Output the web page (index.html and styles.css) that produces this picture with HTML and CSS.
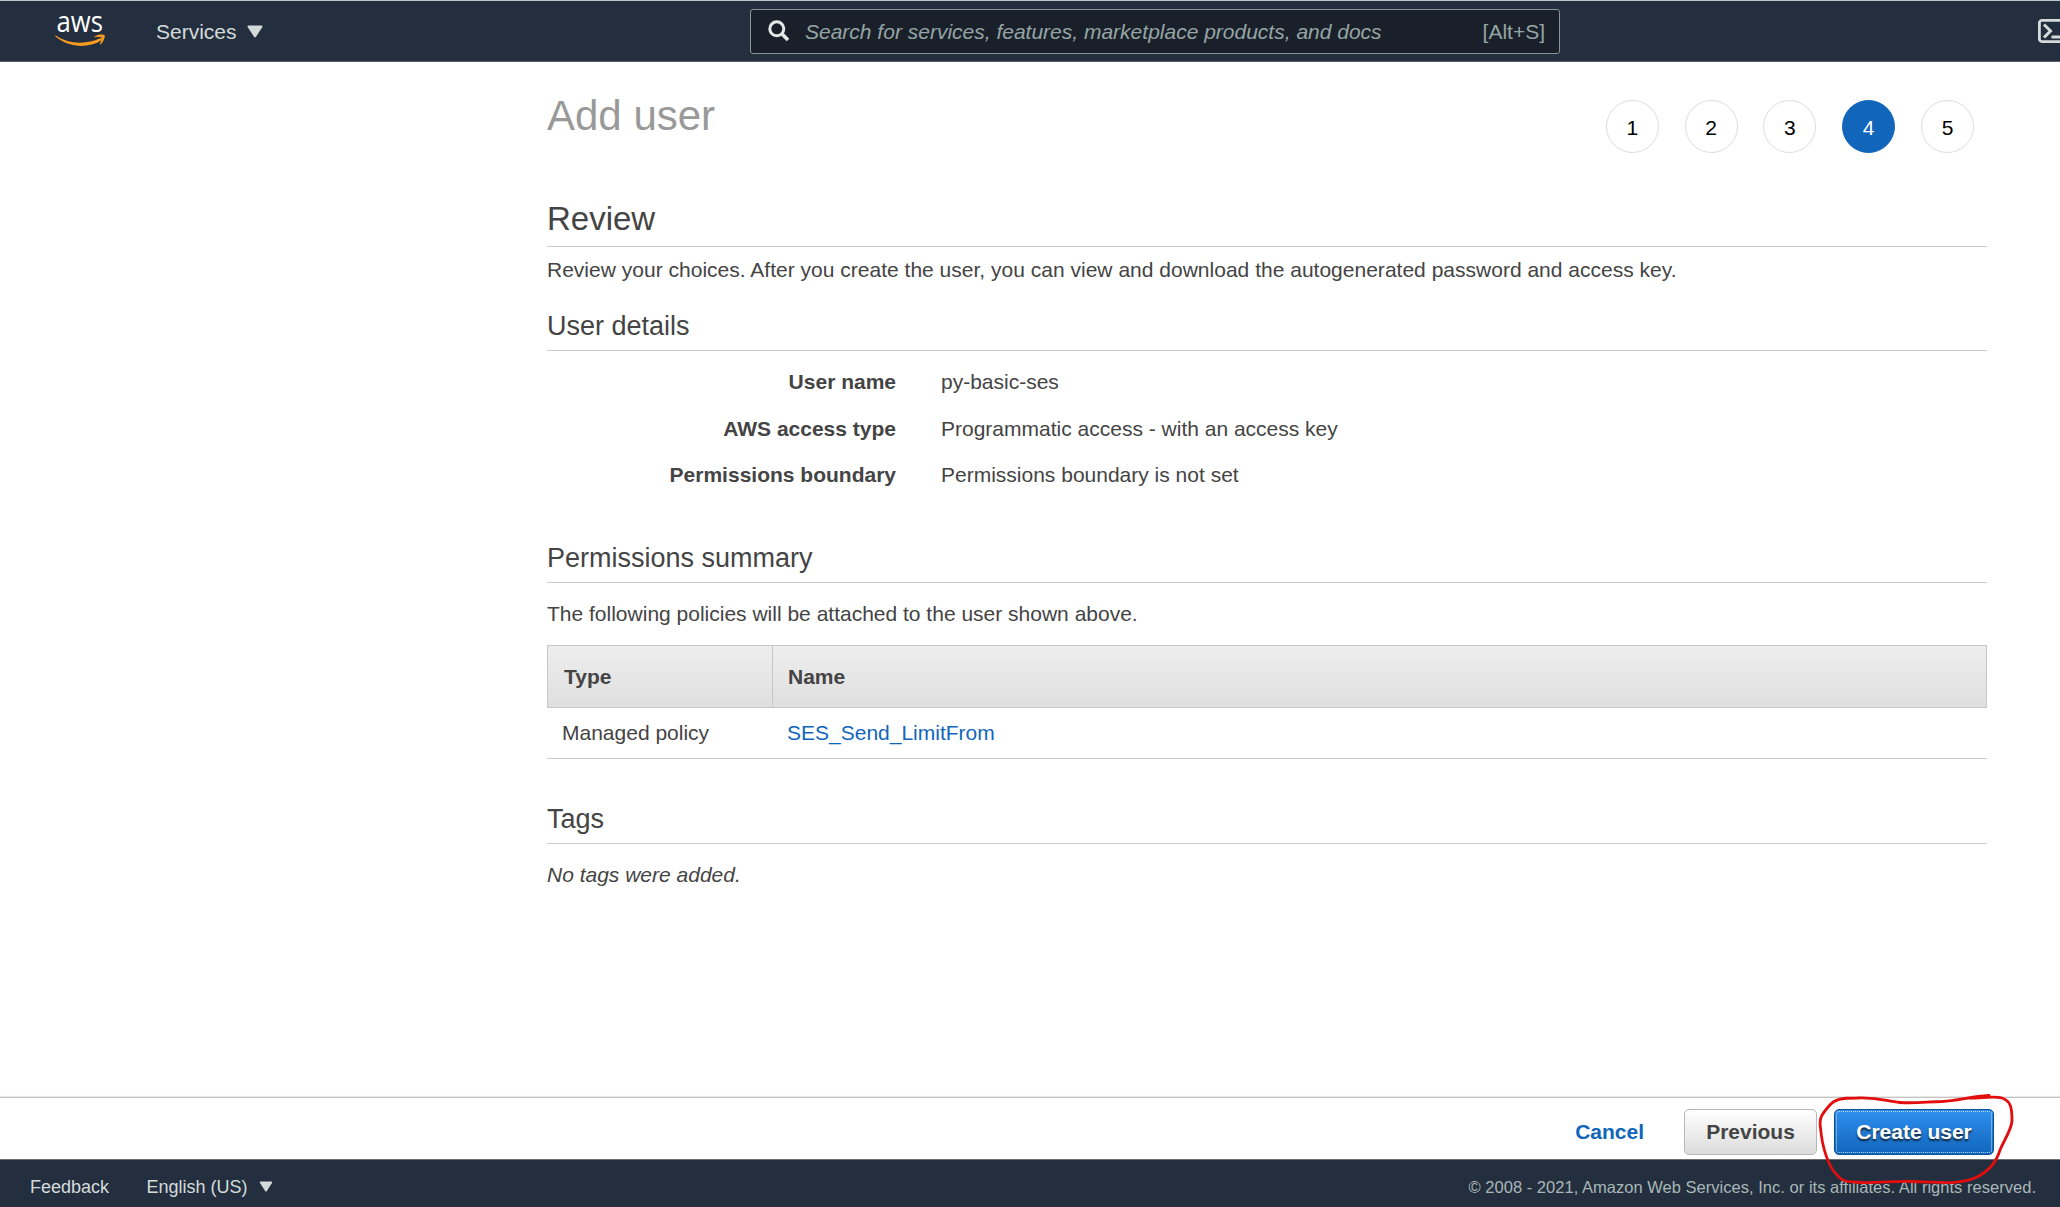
FILE: index.html
```html
<!DOCTYPE html>
<html lang="en">
<head>
<meta charset="utf-8">
<title>Add user</title>
<link rel="stylesheet" href="styles.css">
</head>
<body>
<header class="topbar">
  <svg class="logo" width="54" height="54" viewBox="-1 -14 54 54">
    <text class="logo-text" x="2.500" y="18.500" textLength="46.500" lengthAdjust="spacingAndGlyphs">aws</text>
    <path d="M2 22.500C14 31 32 32 46 25.300C48 24.600 48.500 26.500 47 27.500C34 36 14 34.500 1.500 23.500C1 22.800 1.400 22.200 2 22.500Z" fill="#f79a20"/>
    <path d="M40.500 23.500C44 20.800 50 21 50.700 22.300C51.300 24 49.500 29 46.500 31.500C46 31.800 45.600 31.500 45.900 31C47 28.500 48 25.500 47.500 24.600C46.500 23.700 43.500 23.900 41 24.300C40.300 24.300 40 23.900 40.500 23.500Z" fill="#f79a20"/>
  </svg>
  <nav class="services"><span class="label">Services</span>
    <svg width="16" height="13" viewBox="0 0 16 13"><path d="M1.500 .5H14.500Q16 .8 15.200 2.200L9 11.800Q8 13 7 11.800L.8 2.200Q0 .8 1.500 .5Z" fill="#d5dbdb"/></svg>
  </nav>
  <div class="search">
    <svg width="22" height="22" viewBox="0 0 22 22" fill="none" stroke="#e3e8e8" stroke-width="3"><circle cx="8.800" cy="8.800" r="7"/><path d="M13.800 13.800L20 20" stroke-width="3.600"/></svg>
    <span class="placeholder label">Search for services, features, marketplace products, and docs</span>
    <span class="shortcut label">[Alt+S]</span>
  </div>
  <svg class="shell" width="22" height="24" viewBox="0 0 22 24" fill="none" stroke="#d5dbdb"><rect x="1.400" y="1.400" width="23" height="21.200" rx="2.500" stroke-width="2.800"/><path d="M6 5.500L12.500 12L6 18.500M13.500 18H22" stroke-width="3"/></svg>
</header>

<main class="content">
  <div class="heading">
    <h1>Add user</h1>
    <ol class="steps">
      <li>1</li><li>2</li><li>3</li><li class="active">4</li><li>5</li>
    </ol>
  </div>
  <h2>Review</h2>
  <p class="intro">Review your choices. After you create the user, you can view and download the autogenerated password and access key.</p>

  <h3 class="details-title">User details</h3>
  <dl class="details">
    <dt>User name</dt><dd>py-basic-ses</dd>
    <dt>AWS access type</dt><dd>Programmatic access - with an access key</dd>
    <dt>Permissions boundary</dt><dd>Permissions boundary is not set</dd>
  </dl>

  <h3 class="summary-title">Permissions summary</h3>
  <p class="summary">The following policies will be attached to the user shown above.</p>
  <div class="policies">
    <div class="row head"><div class="type">Type</div><div class="name">Name</div></div>
    <div class="row"><div class="type">Managed policy</div><div class="name"><a>SES_Send_LimitFrom</a></div></div>
  </div>

  <h3 class="tags-title">Tags</h3>
  <p class="no-tags">No tags were added.</p>
</main>

<div class="actions">
  <span class="cancel">Cancel</span>
  <button class="btn previous">Previous</button>
  <button class="btn create">Create user</button>
</div>
<footer class="footer">
  <span class="feedback">Feedback</span>
  <span class="language">English (US)
    <svg width="14" height="11" viewBox="0 0 16 13"><path d="M1.500 .5H14.500Q16 .8 15.200 2.200L9 11.800Q8 13 7 11.800L.8 2.200Q0 .8 1.500 .5Z" fill="#d5dbdb"/></svg>
  </span>
  <span class="copyright">© 2008 - 2021, Amazon Web Services, Inc. or its affiliates. All rights reserved.</span>
</footer>
<svg class="marker" width="210" height="100" viewBox="1815 1090 210 100" fill="none" stroke="#e20d0d" stroke-width="2.800" stroke-linecap="round" stroke-linejoin="round">
  <path d="M1989 1095.500C1970 1096.500 1958 1101 1942 1101.500C1928 1101.500 1918 1103.500 1900 1102.500C1886 1101.500 1880 1097 1857 1098C1841 1098 1835 1099 1829 1106C1821 1115 1819 1119 1820.500 1128C1822 1146 1828 1168 1839 1177C1842 1181 1847 1182 1855 1182C1871 1184 1884 1181 1910 1181.500C1935 1181.500 1958 1186 1977 1177C1991 1170 1997 1160 2000 1150C2005 1138 2011 1131 2012 1121C2012 1108 2011 1101 2002 1098C1994 1096 1983 1098 1969 1098"/>
</svg>
</body>
</html>
```
FILE: styles.css
```css
* { box-sizing: border-box; }
body {
  margin: 0;
  height: 1207px;
  display: flex;
  flex-direction: column;
  overflow: hidden;
  background: #fff;
  color: #444;
  font: 21px/30px "Liberation Sans", Arial, sans-serif;
}
h1, h2, h3, p, dl, dd, ol { margin: 0; padding: 0; font-weight: normal; }
svg { display: block; flex: none; }

.topbar {
  display: flex;
  align-items: center;
  flex: none;
  height: 62px;
  padding-left: 53px;
  background: #232f3e;
  border-top: 1px solid #b9c5cb;
  border-bottom: 1px solid #5a6068;
  color: #d5dbdb;
}
.logo { margin-top: -10px; }
.logo-text { font: 500 28.500px "Open Sans", sans-serif; fill: #fff; }
.label { padding-top: 2px; }
.services { display: flex; align-items: center; gap: 10px; width: 643px; padding-left: 49px; }
.search {
  display: flex;
  align-items: center;
  width: 810px;
  height: 45px;
  padding: 0 14px 0 17px;
  background: #1a2029;
  border: 1px solid #879596;
  border-radius: 3px;
  color: #95a5a6;
}
.placeholder { margin-left: 15px; font-style: italic; }
.shortcut { margin-left: auto; }
.shell { margin-left: auto; }

.content { flex: 1; width: 1440px; margin-left: 547px; padding-top: 28px; }
.heading { display: flex; justify-content: space-between; height: 80px; }
h1 { padding-top: 1px; font-size: 42px; line-height: 50px; color: #999; }
.steps { display: flex; gap: 25.800px; list-style: none; padding: 10px 13px 0 0; color: #000; }
.steps li {
  width: 53px;
  height: 53px;
  border: 1px solid #ddd;
  border-radius: 50%;
  line-height: 54px;
  text-align: center;
}
.steps .active { background: #1166bb; border-color: #1166bb; color: #fff; }
h2 { margin-top: 24px; padding-bottom: 2px; border-bottom: 1px solid #ccc; font-size: 33px; line-height: 50px; }
h3 { height: 45px; border-bottom: 1px solid #ccc; font-size: 27px; line-height: 40px; }
.intro { margin-top: 8px; letter-spacing: .01px; }
.details-title { margin-top: 21px; }
.details { display: grid; grid-template-columns: 349px 1fr; gap: 16.500px 45px; margin-top: 16px; }
.details dt { font-weight: bold; text-align: right; }
.summary-title { margin-top: 48px; }
.summary { margin-top: 16px; }
.policies { margin-top: 16px; }
.row { display: flex; height: 51px; border-bottom: 1px solid #ccc; line-height: 50px; }
.type { width: 225px; padding-left: 15px; }
.name { padding-left: 15px; }
.row a { color: #1166bb; }
.head {
  height: 63px;
  border: 1px solid #c6c6c6;
  background: linear-gradient(#eee, #dfdfdf);
  font-weight: bold;
  line-height: 61px;
}
.head .type { padding-left: 16px; border-right: 1px solid #c6c6c6; }
.tags-title { margin-top: 40px; }
.no-tags { margin-top: 16px; font-style: italic; }

.actions {
  display: flex;
  align-items: flex-start;
  justify-content: flex-end;
  flex: none;
  height: 62px;
  padding: 11px 66px 0 0;
  border-top: 1px solid #c4c4c4;
  box-shadow: 0 -1px 1px #e8e8e8;
  font-weight: bold;
  line-height: 46px;
}
.cancel { margin-right: 40px; color: #1166bb; }
.btn {
  height: 46px;
  padding: 0;
  border-radius: 5px;
  font: bold 21px/44px "Liberation Sans", Arial, sans-serif;
}
.previous { width: 133px; margin-right: 17px; border: 1px solid #b8b8b8; background: linear-gradient(#fff, #dcdcdc); color: #444; }
.create {
  width: 160px;
  border: 1px solid #0d4f94;
  background: linear-gradient(#2f8ff0, #1166bb);
  outline: 1px dotted #b9d9f8;
  outline-offset: -3px;
  color: #fff;
  text-shadow: 0 2px 2px #123;
}
.footer {
  display: flex;
  align-items: center;
  flex: none;
  height: 48px;
  padding: 6px 24px 0 30px;
  background: #232f3e;
  border-top: 1px solid #6a6e75;
  color: #d5dbdb;
  font-size: 18px;
}
.language { display: flex; align-items: center; gap: 11px; margin-left: 37.500px; }
.copyright { margin-left: auto; color: #aab7b8; font-size: 16.500px; letter-spacing: .025px; }
.marker { position: absolute; left: 1815px; top: 1090px; }
```
